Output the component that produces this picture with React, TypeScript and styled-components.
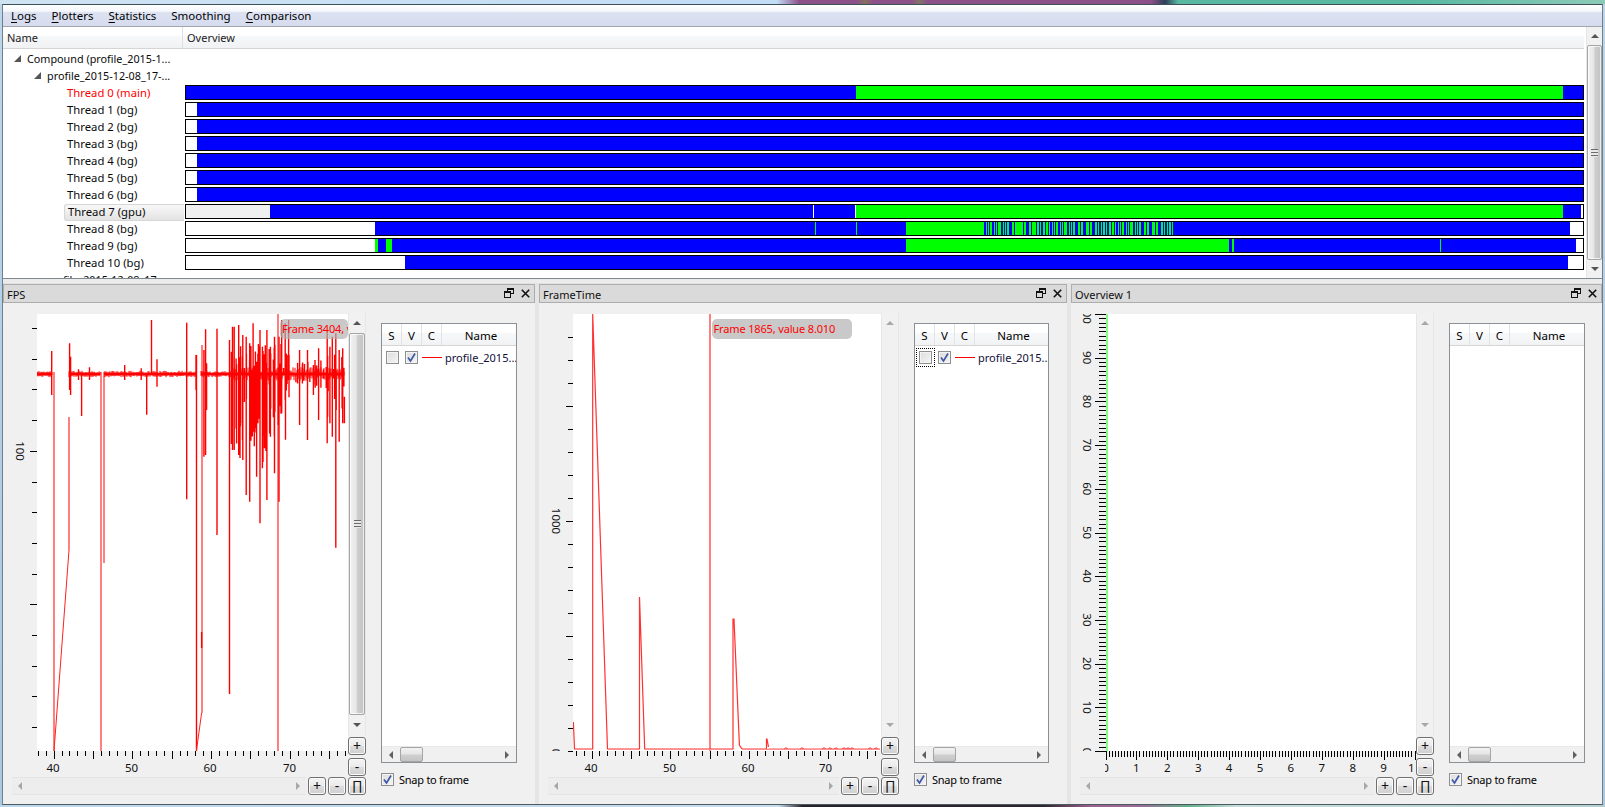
import React from "react";
import styled, { createGlobalStyle } from "styled-components";

const FONT = `"Noto Sans", "Open Sans", "Liberation Sans", sans-serif`;

const Global = createGlobalStyle`
  html, body { margin: 0; padding: 0; background: #f0f0f0; overflow: hidden; }
  body { font-family: ${FONT}; font-size: 12px; color: #000; }
`;

/* ---------- shell ---------- */
const Screen = styled.div`
  width: 1605px; height: 807px; display: flex; flex-direction: column; overflow: hidden;
`;
const DesktopTop = styled.div`
  height: 4px; flex: none;
  background: linear-gradient(90deg, #cfe3f2 0, #c2dcf6 48.4%, #8c5088 49.8%, #8c5088 53.4%, #86705c 53.9%, #8c5088 54.4%, #8c5088 56.8%, #7e7466 57.3%, #8c5088 57.8%, #8c5088 71.7%, #2c3e58 72.6%, #58b8a0 73.4%, #58b8a0 88%, #8ccab8 100%);
`;
const DesktopBottom = styled.div`
  height: 2px; flex: none;
  background: linear-gradient(90deg, #bcd6ea 0, #c8dcec 48.5%, #26222a 50%, #2c262e 65%, #a0608c 68%, #9a6c96 71%, #60b088 74%, #c8dcdc 77%, #b5cfd0 100%);
`;
const Frame = styled.div`
  flex: 1; min-height: 0; display: flex; flex-direction: column;
  padding: 0 2px 0 2px;
  background: linear-gradient(180deg, #bcd6ea, #a9c8e2);
`;
const Window = styled.div`
  flex: 1; min-height: 0; display: flex; flex-direction: column;
  border: 1px solid #6f8088; border-top-color: #3c5058; border-bottom-color: #4c5a62;
  background: #f0f0f0;
`;
const MenuBar = styled.div`
  height: 21px; flex: none; display: flex; align-items: center;
  padding-left: 8px; gap: 15px;
  background: linear-gradient(180deg, #ffffff 0, #f4f6fb 30%, #dce2f1 36%, #d6dcee 100%);
  border-bottom: 1px solid #a2a6ac;
`;
const MenuItem = styled.span`
  font-size: 11.5px; line-height: 21px; color: #000;
  u { text-decoration: underline; text-underline-offset: 2px; }
`;

/* ---------- tree ---------- */
const TreePanel = styled.div`
  height: 251px; flex: none; display: flex; background: #fff;
  border-bottom: 1px solid #80898e; overflow: hidden;
`;
const TreeMain = styled.div`
  flex: 1; min-width: 0; overflow: hidden;
`;
const TreeHeader = styled.div`
  height: 21px; display: flex;
  background: linear-gradient(180deg, #fff 0, #fff 40%, #f7f8f9 42%, #f1f2f4 100%);
  border-bottom: 1px solid #d5d5d5; margin-right: 2px;
`;
const HeaderCell = styled.div<{ $w?: number }>`
  ${p => (p.$w ? `width: ${p.$w}px; flex: none; border-right: 1px solid #dcdfe3;` : "flex: 1;")}
  padding-left: 4px; line-height: 21px; font-size: 11px; color: #222;
  box-sizing: border-box;
`;
const TreeBody = styled.div`
  padding-top: 2px;
`;
const Row = styled.div`
  height: 17px; display: flex; position: relative;
`;
const NameCell = styled.div<{ $indent: number; $red?: boolean; $small?: boolean }>`
  width: 181px; flex: none; box-sizing: border-box; padding: 0 0 3px ${p => p.$indent}px;
  font-size: ${p => (p.$small ? "10.8px" : "11.3px")};
  white-space: nowrap; overflow: hidden;
  color: ${p => (p.$red ? "#ff0000" : "#0a0a0a")};
  display: flex; align-items: center;
`;
const SelectedName = styled.span`
  margin-left: -3px; padding-left: 3px; flex: 1; height: 17px; margin-bottom: -3px;
  border: 1px solid #d6d6d6; border-right: none; border-radius: 3px 0 0 3px;
  box-sizing: border-box; line-height: 13px;
  background: linear-gradient(180deg, #f8f8f8, #e3e3e3);
`;
const Twist = styled.svg`
  width: 7px; height: 7px; flex: none; margin-right: 6px;
`;
const BarSvg = styled.svg`
  display: block; margin-left: 1px; flex: none; width: 1399px; height: 15px;
`;
const TreeScroll = styled.div`
  width: 16px; flex: none; display: flex; flex-direction: column; align-items: stretch;
  background: #f1f1f1; border-left: 1px solid #e6e6e6; box-sizing: border-box;
`;
const ArrowBox = styled.div<{ $h?: number }>`
  height: ${p => p.$h ?? 18}px; flex: none; display: flex; align-items: center; justify-content: center;
`;
const VThumb = styled.div`
  flex: 1; min-height: 0; box-sizing: border-box;
  border: 1px solid #a5a5a5; border-radius: 2px;
  background: linear-gradient(90deg, #f2f2f2 0, #e6e6e6 45%, #cfcfcf 52%, #c2c2c2 100%);
  box-shadow: inset 0 0 0 1px rgba(255,255,255,.7);
  display: flex; align-items: center; justify-content: center;
`;
const Grip = styled.div`
  width: 7px; height: 8px;
  background: repeating-linear-gradient(180deg, #6b6b6b 0, #6b6b6b 1px, #e8e8e8 1px, #e8e8e8 3px);
`;

const Splitter = styled.div`
  height: 5px; flex: none; background: #ececec; border-bottom: 1px solid #e2e2e2; box-sizing: border-box;
`;

/* ---------- docks ---------- */
const DockRow = styled.div`
  flex: 1; min-height: 0; display: flex; gap: 4px; background: #e5e5e5;
`;
const Dock = styled.section<{ $w: number }>`
  width: ${p => p.$w}px; flex: none; display: flex; flex-direction: column; min-width: 0;
  background: #f0f0f0;
`;
const DockTitle = styled.div`
  height: 19px; flex: none; box-sizing: border-box; display: flex; align-items: center;
  background: #dadada; border: 1px solid #adadad; padding: 1px 4px 0 3px;
  font-size: 11px; color: #111;
`;
const DockName = styled.span`
  flex: 1;
`;
const DockIcons = styled.div`
  display: flex; gap: 7px; align-items: center; margin-top: -2px;
`;
const DockBody = styled.div`
  flex: 1; min-height: 0; display: flex; padding-top: 11px;
`;
const PlotColumn = styled.div`
  display: grid; grid-template-columns: auto 18px; grid-template-rows: 463px 18px;
  flex: none;
`;
const ChartWrap = styled.div`
  position: relative; overflow: hidden;
`;
const ChartSvg = styled.svg`
  display: block;
`;
const Tip = styled.div<{ $l: number; $w: number }>`
  position: absolute; top: 5px; left: ${p => p.$l}px; width: ${p => p.$w}px; height: 20px;
  background: rgba(176,176,176,.68); border-radius: 5px; overflow: hidden; white-space: nowrap;
  color: #ff0000; font-size: 11px; letter-spacing: -0.15px; line-height: 20px; padding-left: 2px; box-sizing: border-box;
`;
const VColumn = styled.div`
  display: flex; flex-direction: column; margin-top: -1px;
`;
const VTrack = styled.div`
  height: 422px; flex: none; display: flex; flex-direction: column;
  background: #f1f1f1; border-left: 1px solid #e6e6e6; border-right: 1px solid #e6e6e6; box-sizing: border-box;
`;
const VEmpty = styled.div`
  flex: 1; min-height: 0;
`;
const SideButtons = styled.div`
  display: flex; flex-direction: column; gap: 3px; margin-top: 2px;
`;
const ToolBtn = styled.div`
  width: 18px; height: 18px; flex: none; box-sizing: border-box;
  border: 1px solid #707070; border-radius: 3px;
  background: linear-gradient(180deg, #f4f4f4 0, #ebebeb 48%, #dcdcdc 52%, #cfcfcf 100%);
  box-shadow: inset 0 0 0 1px #fbfbfb;
  display: flex; align-items: center; justify-content: center;
  font-size: 14px; line-height: 16px; color: #111;
`;
const PiBtn = styled(ToolBtn)`
  font-family: "Liberation Sans", sans-serif; font-size: 13px; font-weight: 400;
`;
const HRow = styled.div`
  grid-column: 1 / span 2; display: flex; gap: 2px; padding-left: 9px; min-width: 0;
`;
const HTrack = styled.div`
  flex: 1; min-width: 0; height: 18px; display: flex; align-items: center; justify-content: space-between;
  padding: 0 5px; background: #ededed; border-top: 1px solid #e4e4e4; border-bottom: 1px solid #e4e4e4; box-sizing: border-box;
`;
const ListColumn = styled.div<{ $w: number }>`
  width: ${p => p.$w}px; flex: none; margin-left: 15px; padding-top: 9px;
  display: flex; flex-direction: column;
`;
const ListBox = styled.div`
  height: 440px; flex: none; box-sizing: border-box; border: 1px solid #8b9097; background: #fff;
  display: flex; flex-direction: column;
`;
const ListHeader = styled.div`
  height: 22px; flex: none; display: flex; box-sizing: border-box; border-bottom: 1px solid #d5d5d5;
  background: linear-gradient(180deg, #fff 0, #fff 40%, #f7f8f9 42%, #f1f2f4 100%);
`;
const ListHead = styled.div<{ $w?: number }>`
  ${p => (p.$w ? `width: ${p.$w}px; flex: none; border-right: 1px solid #e1e3e6;` : "flex: 1; padding-left: 4px;")}
  text-align: center; line-height: 24px; font-size: 11.5px; box-sizing: border-box;
`;
const ListRows = styled.div`
  flex: 1; min-height: 0; padding-top: 2px; overflow: hidden;
`;
const SeriesRow = styled.div`
  height: 18px; display: flex; align-items: center; padding-left: 4px; position: relative;
`;
const Check = styled.div<{ $focus?: boolean; $second?: boolean }>`
  width: 13px; height: 13px; box-sizing: border-box; flex: none; position: relative;
  border: 1px solid #8e8f8f; background: linear-gradient(135deg, #dcdcdc, #f5f5f5);
  box-shadow: inset 0 0 0 1px #f4f4f4;
  display: flex; align-items: center; justify-content: center;
  ${p => (p.$second ? "margin-left: 6px;" : "")}
  ${p => (p.$focus ? "outline: 1px dotted #000; outline-offset: 2px;" : "")}
`;
const Swatch = styled.div`
  width: 20px; height: 1px; background: #ff0000; flex: none; margin-left: 4px;
`;
const SeriesName = styled.span`
  margin-left: 3px; white-space: nowrap; font-size: 11px; color: #10103a; overflow: hidden;
`;
const ListHScroll = styled.div`
  height: 16px; flex: none; display: flex; align-items: center; background: #f0f0f0; padding: 0 6px;
  gap: 6px; box-sizing: border-box; border-top: 1px solid #e8e8e8;
`;
const HThumb = styled.div`
  width: 23px; height: 15px; box-sizing: border-box; border: 1px solid #a5a5a5; border-radius: 2px;
  background: linear-gradient(180deg, #f2f2f2 0, #e6e6e6 45%, #cfcfcf 55%, #c4c4c4 100%);
`;
const Spacer = styled.div`
  flex: 1;
`;
const SnapRow = styled.div`
  display: flex; align-items: center; gap: 5px; margin-top: 9px; font-size: 11px; letter-spacing: -0.25px; height: 14px;
`;

/* ---------- small drawings ---------- */
const Tri = ({ dir, c = "#606060" }: { dir: "u" | "d" | "l" | "r"; c?: string }) => {
  const pts = { u: "0,5 8,5 4,1", d: "0,1 8,1 4,5", l: "5,0 5,8 1,4", r: "1,0 1,8 5,4" }[dir];
  const w = dir === "u" || dir === "d" ? 8 : 6;
  const h = dir === "u" || dir === "d" ? 6 : 8;
  return <svg width={w} height={h} viewBox={`0 0 ${w} ${h}`}><polygon points={pts} fill={c} /></svg>;
};
const FloatIcon = () => (
  <svg width="10" height="10" viewBox="0 0 10 10" fill="none" stroke="#111" strokeWidth="1" shapeRendering="crispEdges">
    <rect x="3.5" y="0.5" width="6" height="5" /><path d="M3.5 1.5h6" />
    <rect x="0.5" y="3.5" width="6" height="6" fill="#dadada" /><path d="M0.5 4.5h6" />
  </svg>
);
const CloseIcon = () => (
  <svg width="9" height="9" viewBox="0 0 9 9" stroke="#111" strokeWidth="1.6" fill="none">
    <path d="M0.8 0.8 8.2 8.2M8.2 0.8 0.8 8.2" />
  </svg>
);
const Tick = () => (
  <svg width="11" height="11" viewBox="0 0 11 11" fill="none" stroke="#3f57a6" strokeWidth="1.7">
    <path d="M2 5.5 4.5 9 9 1.5" />
  </svg>
);
const TreeTwist = () => (
  <Twist viewBox="0 0 7 7"><polygon points="0,7 7,7 7,0" fill="#555" /></Twist>
);

/* ---------- overview bars ---------- */
const B = "#0000ff", G = "#00ff00", W = "#ffffff", S = "#f0f0f0";
type Seg = [number, number, string];
const stripes = (): Seg[] => {
  const out: Seg[] = [[906, 1174, G], [1174, 1570, B]];
  const cyc = [3, 2, 3, 3, 2, 4, 3, 2];
  let x = 984, i = 0;
  while (x < 1174) {
    const solid = (x >= 1015 && x < 1023) || (x >= 1032 && x < 1036);
    if (!solid) out.push([x, x + (i % 3 === 0 ? 2 : 1), B]);
    x += cyc[i % cyc.length]; i++;
  }
  return out;
};
const rows: { name: string; red?: boolean; sel?: boolean; segs: Seg[] }[] = [
  { name: "Thread 0 (main)", red: true, segs: [[186, 856, B], [856, 1563, G], [1563, 1583, B]] },
  ...[1, 2, 3, 4, 5, 6].map(n => ({ name: `Thread ${n} (bg)`, segs: [[197, 1583, B]] as Seg[] })),
  { name: "Thread 7 (gpu)", sel: true, segs: [[186, 270, S], [270, 856, B], [813, 814, W], [855, 856, W], [856, 1563, G], [1563, 1581, B]] },
  { name: "Thread 8 (bg)", segs: [[375, 906, B], [815, 816, G], [856, 857, G], ...stripes()] },
  { name: "Thread 9 (bg)", segs: [[375, 378, G], [378, 386, B], [386, 392, G], [392, 906, B], [906, 1229, G], [1229, 1232, B], [1232, 1234, G], [1234, 1576, B], [1440, 1441, G]] },
  { name: "Thread 10 (bg)", segs: [[405, 1568, B]] },
];
const OverviewBar = ({ segs }: { segs: Seg[] }) => (
  <BarSvg viewBox="185 0 1399 15" shapeRendering="crispEdges">
    <rect x="185.5" y="0.5" width="1398" height="14" fill="#fff" stroke="#000" />
    {segs.map(([a, b, c], i) => <rect key={i} x={a} y="1" width={b - a} height="13" fill={c} />)}
  </BarSvg>
);

/* ---------- plot data ---------- */
const rng = (seed: number) => () => {
  seed |= 0; seed = (seed + 0x6d2b79f5) | 0;
  let t = Math.imul(seed ^ (seed >>> 15), 1 | seed);
  t = (t + Math.imul(t ^ (t >>> 7), 61 | t)) ^ t;
  return ((t ^ (t >>> 14)) >>> 0) / 4294967296;
};
const zx = (z: number) => +(z * 0.3444).toFixed(1);
const zy = (z: number) => 280 + z / 3;

const fpsPaths = (() => {
  const r = rng(11);
  let base = "";
  const ranges = [[37, 52], [69, 100], [104, 196], [201, 344]];
  for (const [a, b] of ranges) {
    for (let x = a; x <= b; x += 1) {
      const dense = x > 230;
      const up = 1 + r() * (dense ? 6 : 2.2), dn = 1 + r() * (dense ? 6 : 2.2);
      base += `M${x} ${(374 - up).toFixed(1)}V${(374 + dn).toFixed(1)}`;
    }
  }
  let bright = "";
  const hand: [number, number, number][] = [
    [150, 213, 345], [202, 190, 330], [205, 230, 345], [237, 282, 408], [228, 268, 300], [260, 262, 300],
    [426, 282, 404], [440, 120, 282], [456, 238, 320], [362, 255, 300], [410, 265, 300], [542, 128, 658],
    [569, 225, 330], [592, 210, 530], [597, 148, 525], [600, 250, 390], [630, 146, 765],
    [675, 140, 510], [680, 140, 510], [693, 135, 525], [705, 165, 540], [715, 170, 645], [725, 190, 665],
    [735, 130, 455], [745, 250, 590], [755, 150, 730], [762, 200, 565], [775, 150, 660], [785, 200, 470],
    [797, 170, 580], [810, 170, 665], [818, 120, 400], [828, 130, 360], [838, 120, 300], [870, 210, 435], [893, 210, 480],
    [910, 255, 345], [925, 205, 420], [950, 160, 490], [958, 200, 430], [965, 170, 470], [975, 160, 803], [985, 210, 485], [995, 205, 430], [1000, 350, 430],
  ];
  for (const [x, a, b] of hand) bright += `M${zx(x)} ${zy(a).toFixed(1)}V${zy(b).toFixed(1)}`;
  for (let i = 0; i < 50; i++) {
    const x = 231 + r() * 58;
    bright += `M${x.toFixed(1)} ${(374 - r() * 30).toFixed(1)}V${(374 + r() * 90).toFixed(1)}`;
  }
  for (let i = 0; i < 16; i++) {
    const x = 293 + r() * 32;
    bright += `M${x.toFixed(1)} ${(374 - r() * 14).toFixed(1)}V${(374 + r() * 14).toFixed(1)}`;
  }
  for (let i = 0; i < 12; i++) {
    const x = 325 + r() * 19;
    bright += `M${x.toFixed(1)} ${(374 - r() * 30).toFixed(1)}V${(374 + r() * 55).toFixed(1)}`;
  }
  bright += "M196.5 355V751M229.5 340V694M201.6 632V648";
  const pink = "M53.8 372V751M69 550V417M100.6 372V751M104.4 376V563M202 345V713M278 314V751";
  const diag = "M54 751 69 550M196.4 751 201.6 713";
  return { base, bright, pink, diag };
})();

const ft = (() => {
  const r = rng(5);
  let tail = "M768.5 749";
  for (let x = 770; x <= 881; x += 2) tail += `L${x} ${r() > 0.8 ? 748 : 749}`;
  return tail;
})();

const ticks = (from: number, to: number, step: number) => {
  const out: number[] = [];
  for (let v = from; v <= to + 0.01; v += step) out.push(+v.toFixed(2));
  return out;
};

type AxisProps = {
  left: number; width: number; plotLeft: number; id: string; children?: React.ReactNode;
  yTicks: { y: number; major: boolean }[]; yMinorLen: number; yMajorLen: number;
  yLabels: { y: number; t: string }[]; yLabelX: number;
  xTicks: { x: number; h: number }[]; xLabels: { x: number; t: string }[];
};
const Chart = ({ left, width, plotLeft, id, children, yTicks, yMinorLen, yMajorLen, yLabels, yLabelX, xTicks, xLabels }: AxisProps) => {
  const right = left + width;
  return (
    <ChartSvg width={width} height={463} viewBox={`${left} 314 ${width} 463`}>
      <defs>
        <clipPath id={`${id}p`}><rect x={plotLeft} y="314" width={right - plotLeft} height="437" /></clipPath>
        <clipPath id={`${id}y`}><rect x={left} y="314" width={plotLeft - left} height="437" /></clipPath>
        <clipPath id={`${id}x`}><rect x={plotLeft - 1} y="751" width={right - plotLeft - 1} height="30" /></clipPath>
      </defs>
      <rect x={plotLeft} y="314" width={right - plotLeft} height="437" fill="#fff" />
      <g clipPath={`url(#${id}p)`}>{children}</g>
      <g stroke="#000" shapeRendering="crispEdges">
        {yTicks.map((t, i) => (
          <line key={i} x1={plotLeft - (t.major ? yMajorLen : yMinorLen)} x2={plotLeft} y1={Math.round(t.y) + 0.5} y2={Math.round(t.y) + 0.5} />
        ))}
        {xTicks.map((t, i) => (
          <line key={i} x1={Math.round(t.x) + 0.5} x2={Math.round(t.x) + 0.5} y1="751" y2={751 + t.h} />
        ))}
      </g>
      <g clipPath={`url(#${id}y)`} fontFamily={FONT} fontSize="11.5" fill="#111" textAnchor="middle">
        {yLabels.map((l, i) => (
          <text key={i} transform={`translate(${yLabelX} ${l.y}) rotate(90)`} dy="4">{l.t}</text>
        ))}
      </g>
      <g clipPath={`url(#${id}x)`} fontFamily={FONT} fontSize="11.5" fill="#111" textAnchor="middle">
        {xLabels.map((l, i) => <text key={i} x={l.x} y="772">{l.t}</text>)}
      </g>
    </ChartSvg>
  );
};

const Side = ({ thumb }: { thumb?: boolean }) => (
  <VColumn>
    <VTrack>
      <ArrowBox $h={20}><Tri dir="u" c={thumb ? "#555" : "#a8a8a8"} /></ArrowBox>
      {thumb ? <VThumb><Grip /></VThumb> : <VEmpty />}
      <ArrowBox $h={20}><Tri dir="d" c={thumb ? "#555" : "#a8a8a8"} /></ArrowBox>
    </VTrack>
    <SideButtons>
      <ToolBtn>+</ToolBtn>
      <ToolBtn>-</ToolBtn>
    </SideButtons>
  </VColumn>
);
const BottomControls = () => (
  <HRow>
    <HTrack><Tri dir="l" c="#a8a8a8" /><Tri dir="r" c="#a8a8a8" /></HTrack>
    <ToolBtn>+</ToolBtn>
    <ToolBtn>-</ToolBtn>
    <PiBtn>∏</PiBtn>
  </HRow>
);
const SeriesList = ({ w, series, focus }: { w: number; series: boolean; focus?: boolean }) => (
  <ListColumn $w={w}>
    <ListBox>
      <ListHeader>
        <ListHead $w={20}>S</ListHead>
        <ListHead $w={20}>V</ListHead>
        <ListHead $w={20}>C</ListHead>
        <ListHead>Name</ListHead>
      </ListHeader>
      <ListRows>
        {series && (
          <SeriesRow>
            <Check $focus={focus} />
            <Check $second><Tick /></Check>
            <Swatch />
            <SeriesName>profile_2015...</SeriesName>
          </SeriesRow>
        )}
      </ListRows>
      <ListHScroll>
        <Tri dir="l" /><HThumb /><Spacer /><Tri dir="r" />
      </ListHScroll>
    </ListBox>
    <SnapRow><Check><Tick /></Check>Snap to frame</SnapRow>
  </ListColumn>
);
const Title = ({ text }: { text: string }) => (
  <DockTitle>
    <DockName>{text}</DockName>
    <DockIcons><FloatIcon /><CloseIcon /></DockIcons>
  </DockTitle>
);

/* axis definitions */
const axisA = {
  yTicks: ticks(0, 13, 1).map(i => ({ y: 328 + i * 30.7, major: i === 4 || i === 9 })),
  yLabels: [{ y: 451, t: "100" }],
  xTicks: ticks(-2, 38, 1).map(i => ({ x: 53.7 + i * 7.87, h: i % 5 === 0 ? 8 : 5 })).filter(t => t.x < 348),
  xLabels: [{ x: 53, t: "40" }, { x: 131.6, t: "50" }, { x: 210, t: "60" }, { x: 289.5, t: "70" }],
};
const axisB = {
  yTicks: ticks(0, 18, 1).map(i => ({ y: 337 + i * 23, major: i === 3 || i === 8 || i === 13 })),
  yLabels: [{ y: 521, t: "1000" }, { y: 752, t: "0" }],
  xTicks: ticks(-2, 37, 1).map(i => ({ x: 591.5 + i * 7.87, h: i % 5 === 0 ? 8 : 5 })).filter(t => t.x < 881),
  xLabels: [{ x: 591, t: "40" }, { x: 669.5, t: "50" }, { x: 748, t: "60" }, { x: 825.5, t: "70" }],
};
const axisC = {
  yTicks: ticks(0, 100, 1).map(i => ({ y: 314 + i * 4.37, major: i % 10 === 0 })),
  yLabels: ticks(0, 10, 1).map(i => ({ y: 314 + i * 43.7, t: String(100 - i * 10) })),
  xTicks: ticks(0, 100, 1).map(i => ({ x: 1105.5 + i * 3.09, h: i % 10 === 0 ? 9 : 6 })).filter(t => t.x < 1416),
  xLabels: ticks(0, 10, 1).map(i => ({ x: 1105.5 + i * 30.9, t: i === 10 ? "10" : String(i) })),
};

export default function App() {
  return (
    <Screen>
      <Global />
      <DesktopTop />
      <Frame>
        <Window>
          <MenuBar>
            <MenuItem><u>L</u>ogs</MenuItem>
            <MenuItem><u>P</u>lotters</MenuItem>
            <MenuItem><u>S</u>tatistics</MenuItem>
            <MenuItem>Smoothing</MenuItem>
            <MenuItem><u>C</u>omparison</MenuItem>
          </MenuBar>
          <TreePanel>
            <TreeMain>
              <TreeHeader>
                <HeaderCell $w={180}>Name</HeaderCell>
                <HeaderCell>Overview</HeaderCell>
              </TreeHeader>
              <TreeBody>
                <Row>
                  <NameCell $indent={11} $small><TreeTwist />Compound (profile_2015-1...</NameCell>
                </Row>
                <Row>
                  <NameCell $indent={31} $small><TreeTwist />profile_2015-12-08_17-...</NameCell>
                </Row>
                {rows.map(r => (
                  <Row key={r.name}>
                    <NameCell $indent={64} $red={r.red}>
                      {r.sel ? <SelectedName>{r.name}</SelectedName> : r.name}
                    </NameCell>
                    <OverviewBar segs={r.segs} />
                  </Row>
                ))}
                <Row>
                  <NameCell $indent={60} $small>file_2015-12-08_17-...</NameCell>
                </Row>
              </TreeBody>
            </TreeMain>
            <TreeScroll>
              <ArrowBox><Tri dir="u" c="#555" /></ArrowBox>
              <VThumb><Grip /></VThumb>
              <ArrowBox><Tri dir="d" c="#555" /></ArrowBox>
            </TreeScroll>
          </TreePanel>
          <Splitter />
          <DockRow>
            <Dock $w={532}>
              <Title text="FPS" />
              <DockBody>
                <PlotColumn>
                  <ChartWrap>
                    <Chart left={3} width={345} plotLeft={37} id="a" yMinorLen={5} yMajorLen={7} yLabelX={20} {...axisA}>
                      <g fill="none">
                        <path d={fpsPaths.pink} stroke="#ff8080" strokeWidth="2" shapeRendering="crispEdges" />
                        <path d={fpsPaths.base} stroke="#ff0000" strokeWidth="1" />
                        <path d={fpsPaths.bright} stroke="#ff0000" strokeWidth="1.4" />
                        <path d={fpsPaths.diag} stroke="#ff2020" strokeWidth="1" />
                        <path d="M37 374H52M69 374H100M104 374H196M201 374H344" stroke="#ff0000" strokeWidth="2.5" />
                      </g>
                    </Chart>
                    <Tip $l={277} $w={68}>Frame 3404, value</Tip>
                  </ChartWrap>
                  <Side thumb />
                  <BottomControls />
                </PlotColumn>
                <SeriesList w={136} series />
              </DockBody>
            </Dock>
            <Dock $w={528}>
              <Title text="FrameTime" />
              <DockBody>
                <PlotColumn>
                  <ChartWrap>
                    <Chart left={539} width={342} plotLeft={573} id="b" yMinorLen={5} yMajorLen={7} yLabelX={556} {...axisB}>
                      <g fill="none">
                        <path d="M710 314V751" stroke="#ff8080" strokeWidth="2" shapeRendering="crispEdges" />
                        <path d="M573.4 722 574.5 749H592.7V314L607.5 749H639.5V597L644.7 749H733V619H734L739.4 745 742 749" stroke="#ff3030" strokeWidth="1.2" />
                        <path d="M742 749H766.5V739H767L768.5 747" stroke="#ff3030" strokeWidth="1.2" />
                        <path d={ft} stroke="#ff5050" strokeWidth="1.2" />
                        <path d="M574 749.5H592M608 749.5H639M645 749.5H733M742 749.5H880" stroke="#ff9090" strokeWidth="1" />
                      </g>
                    </Chart>
                    <Tip $l={172.5} $w={140}>Frame 1865, value 8.010</Tip>
                  </ChartWrap>
                  <Side />
                  <BottomControls />
                </PlotColumn>
                <SeriesList w={135} series focus />
              </DockBody>
            </Dock>
            <Dock $w={531}>
              <Title text="Overview 1" />
              <DockBody>
                <PlotColumn>
                  <ChartWrap>
                    <Chart left={1071} width={345} plotLeft={1106} id="c" yMinorLen={7} yMajorLen={11} yLabelX={1087} {...axisC}>
                      <path d="M1106 314V751" stroke="#80ff80" strokeWidth="3" shapeRendering="crispEdges" />
                    </Chart>
                  </ChartWrap>
                  <Side />
                  <BottomControls />
                </PlotColumn>
                <SeriesList w={136} series={false} />
              </DockBody>
            </Dock>
          </DockRow>
        </Window>
      </Frame>
      <DesktopBottom />
    </Screen>
  );
}
